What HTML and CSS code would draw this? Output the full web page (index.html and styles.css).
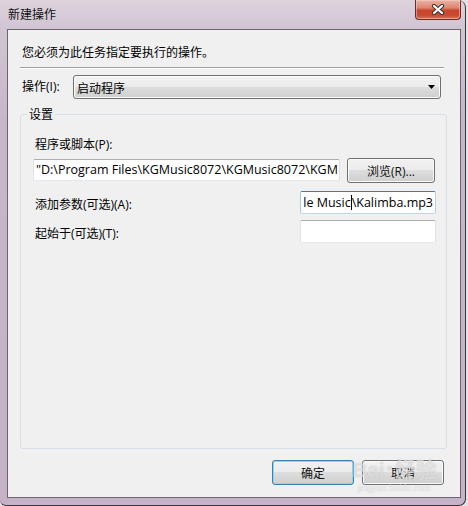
FILE: index.html
```html
<!DOCTYPE html>
<html lang="zh-CN">
<head>
<meta charset="utf-8">
<title>新建操作</title>
<link rel="stylesheet" href="styles.css">
</head>
<body>
<div class="window">
  <div class="titlebar">
    <span class="title">新建操作</span>
    <div class="close">
      <svg width="14" height="11" viewBox="0 0 14 11">
        <path d="M3 2 L11 9 M11 2 L3 9" stroke="#3a3434" stroke-width="4.2" stroke-linecap="round" fill="none"/>
        <path d="M3 2 L11 9 M11 2 L3 9" stroke="#ffffff" stroke-width="2.2" stroke-linecap="round" fill="none"/>
      </svg>
    </div>
  </div>
  <div class="client">
    <p class="intro">您必须为此任务指定要执行的操作。</p>
    <div class="sep"></div>
    <div class="action-row">
      <span class="action-label">操作(I):</span>
      <div class="combo">
        <span>启动程序</span>
        <svg class="arrow" width="7" height="4" viewBox="0 0 7 4"><path d="M0 0 H7 L3.5 4 Z" fill="#000"/></svg>
      </div>
    </div>
    <fieldset class="group">
      <legend>设置</legend>
      <div class="label">程序或脚本(P):</div>
      <div class="prog-row">
        <div class="textbox wide"><span class="clip">"D:\Program Files\KGMusic8072\KGMusic8072\KGMusic.exe"</span></div>
        <div class="btn browse">浏览(R)...</div>
      </div>
      <div class="field-row">
        <div class="label pad">添加参数(可选)(A):</div>
        <div class="textbox small focus"><span>le Music<i class="caret"></i>\Kalimba.mp3</span></div>
      </div>
      <div class="field-row second">
        <div class="label pad">起始于(可选)(T):</div>
        <div class="textbox small"></div>
      </div>
    </fieldset>
    <div class="buttons">
      <div class="btn default">确定</div>
      <div class="btn">取消</div>
    </div>
  </div>
  <div class="watermark">
    <span class="wm-main">Bai<span class="wm-paw">●</span>经验</span>
    <span class="wm-url">jingyan.baidu.com</span>
  </div>
</div>
</body>
</html>
```
FILE: styles.css
```css
html, body {
  margin: 0;
  padding: 0;
}
body {
  background: #e6e2e6;
  font-family: "Open Sans", "Noto Sans CJK SC", sans-serif;
  font-size: 12px;
  color: #000;
}
.window {
  position: relative;
  width: 466px;
  height: 506px;
  box-sizing: border-box;
  background: linear-gradient(180deg, #dcd3dd 0px, #d2c5d3 28px, #c8b5ca 120px, #c6b1c8 100%);
  border-right: 1px solid #3e3542;
  border-bottom: 1px solid #3e3542;
  border-radius: 0 8px 7px 6px;
  display: flex;
  flex-direction: column;
  overflow: hidden;
}
.titlebar {
  height: 29px;
  flex: none;
  display: flex;
  justify-content: space-between;
  align-items: flex-start;
  padding-left: 8px;
}
.title {
  margin-top: 6px;
  line-height: 16px;
  font-family: "Noto Sans CJK SC", sans-serif;
  color: #111;
}
.close {
  width: 46px;
  height: 20px;
  box-sizing: border-box;
  margin-right: 4px;
  border: 1px solid #6a2d25;
  border-top: none;
  border-radius: 0 0 4px 4px;
  background: linear-gradient(180deg, #ebb3a4 0%, #dd8671 40%, #c9452c 55%, #c84a31 80%, #d8735c 100%);
  box-shadow: inset 0 0 0 1px rgba(255, 220, 210, 0.45);
  display: flex;
  align-items: center;
  justify-content: center;
}
.client {
  flex: 1;
  margin: 0 4px 7px 7px;
  border: 1px solid #6a666d;
  background: #f0f0f0;
  display: flex;
  flex-direction: column;
}
.intro {
  margin: 14px 0 0 14px;
  line-height: 16px;
  font-family: "Noto Sans CJK SC", sans-serif;
}
.sep {
  margin: 7px 16px 0 12px;
  height: 1px;
  background: #a0a0a0;
  border-bottom: 1px solid #ffffff;
}
.action-row {
  margin-top: 6px;
  padding-left: 14px;
  display: flex;
  align-items: center;
}
.action-label {
  width: 51px;
  line-height: 16px;
}
.combo {
  width: 368px;
  height: 24px;
  box-sizing: border-box;
  border: 1px solid #707070;
  border-radius: 3px;
  background: linear-gradient(180deg, #f2f2f2 0%, #ebebeb 50%, #dddddd 50%, #cfcfcf 100%);
  box-shadow: inset 0 0 0 1px #fbfbfb;
  display: flex;
  align-items: center;
  justify-content: space-between;
  padding: 0 5px 0 3px;
  font-family: "Noto Sans CJK SC", sans-serif;
}
.arrow {
  display: block;
}
.group {
  margin: 7px 0 0 12px;
  width: 427px;
  height: 343px;
  box-sizing: border-box;
  padding: 15px 10px 0 14px;
  border: 1px solid #d5dfe5;
  border-radius: 3px;
  min-width: 0;
}
.group legend {
  padding: 0 2px;
  margin-left: -8px;
  line-height: 16px;
  font-family: "Noto Sans CJK SC", sans-serif;
}
.label {
  line-height: 16px;
  white-space: nowrap;
}
.label.pad {
  padding-top: 6px;
}
.prog-row {
  margin: 5px 0 0 -2px;
  display: flex;
  align-items: flex-start;
}
.textbox {
  box-sizing: border-box;
  background: #fff;
  border: 1px solid;
  border-color: #abadb3 #dbdfe6 #e3e9ef #e2e3ea;
  border-radius: 2px;
  padding: 0 2px;
  line-height: 20px;
  font-size: 12.5px;
  overflow: hidden;
  white-space: nowrap;
  display: flex;
  align-items: center;
}
.textbox span {
  white-space: nowrap;
  flex: none;
}
.textbox span.clip {
  flex: 1 1 auto;
  min-width: 0;
  overflow: hidden;
  text-overflow: clip;
}
.textbox.wide {
  width: 307px;
  height: 22px;
  margin-top: 1px;
}
.textbox.small {
  width: 136px;
  height: 23px;
}
.textbox.focus {
  border-color: #3d7bad #b5cfe7 #b7d9ed #a4c9e3;
  justify-content: flex-end;
}
.caret {
  display: inline-block;
  width: 1px;
  height: 15px;
  background: #000;
  vertical-align: -3px;
}
.btn {
  box-sizing: border-box;
  border: 1px solid #707070;
  border-radius: 3px;
  background: linear-gradient(180deg, #f2f2f2 0%, #ebebeb 50%, #dddddd 50%, #cfcfcf 100%);
  box-shadow: inset 0 0 0 1px #fbfbfb;
  display: flex;
  align-items: center;
  justify-content: center;
  font-family: "Open Sans", "Noto Sans CJK SC", sans-serif;
  color: #111;
}
.btn.browse {
  margin-left: 7px;
  width: 88px;
  height: 25px;
}
.field-row {
  margin-top: 8px;
  display: flex;
  justify-content: space-between;
  align-items: flex-start;
}
.field-row.second {
  margin-top: 6px;
}
.buttons {
  margin: 11px 16px 0 0;
  display: flex;
  justify-content: flex-end;
  gap: 8px;
}
.buttons .btn {
  width: 82px;
  height: 25px;
}
.btn.default {
  border-color: #3c7fb1;
  box-shadow: inset 0 0 0 1px #8fd3f4;
}
.watermark {
  position: absolute;
  left: 352px;
  top: 455px;
  display: flex;
  flex-direction: column;
  align-items: center;
  pointer-events: none;
}
.wm-main {
  font-family: "Liberation Sans", "Noto Sans CJK SC", sans-serif;
  font-size: 21px;
  font-weight: bold;
  line-height: 26px;
  color: rgba(255, 255, 255, 0.55);
  text-shadow: 0 0 1px rgba(120, 120, 120, 0.45);
}
.wm-paw {
  font-size: 10px;
  vertical-align: 6px;
  margin: 0 2px;
}
.wm-url {
  font-family: "Liberation Sans", sans-serif;
  font-size: 9px;
  line-height: 10px;
  color: rgba(255, 255, 255, 0.6);
  text-shadow: 0 0 1px rgba(120, 120, 120, 0.4);
}
```
